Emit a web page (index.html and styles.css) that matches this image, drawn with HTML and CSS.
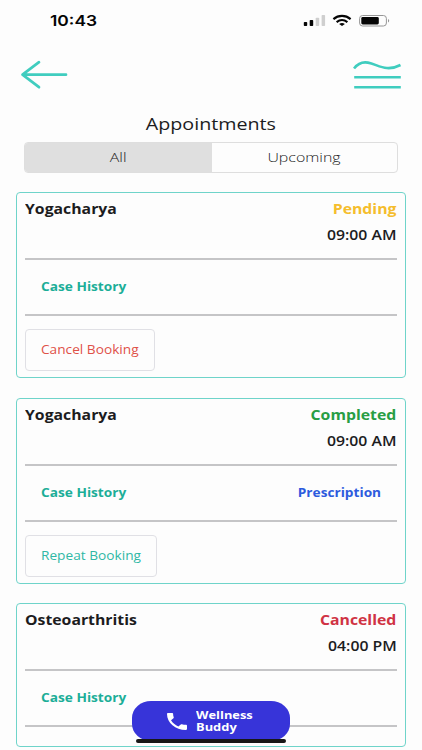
FILE: index.html
```html
<!DOCTYPE html>
<html lang="en">
<head>
<meta charset="utf-8">
<title>Appointments</title>
<link rel="stylesheet" href="styles.css">
</head>
<body>
<div class="screen">
  <header class="status">
    <span class="clock wide">10:43</span>
    <svg class="status-icons" width="88" height="14" viewBox="0 0 88 14">
      <g fill="#050505"><rect x="0.8" y="8" width="3.4" height="4" rx="0.8"/><rect x="6.7" y="6" width="3.5" height="6" rx="0.8"/></g>
      <g fill="#cfcfcf"><rect x="12.7" y="3.7" width="3.5" height="8.3" rx="0.8"/><rect x="18.6" y="1" width="3.5" height="11" rx="0.8"/></g>
      <g fill="none" stroke="#050505" stroke-width="2.1">
        <path d="M30.4 5.1C35.4.8 42.6.8 47.6 5.1"/>
        <path d="M33.6 8.1C37 5.5 41 5.5 44.4 8.1"/>
      </g>
      <path d="M36.1 9.9Q39 8 41.9 9.9L39 12.1Z" fill="#050505"/>
      <rect x="56.6" y="1.5" width="26.8" height="10.5" rx="3" fill="none" stroke="#969696"/>
      <rect x="58.3" y="3.1" width="17.5" height="7.4" rx="1.4" fill="#050505"/>
      <path d="M85 5C86.6 5.4 86.6 8 85 8.4Z" fill="#969696"/>
    </svg>
  </header>
  <nav class="nav">
    <svg width="50" height="34" viewBox="0 0 50 34" fill="none" stroke="#40cdbf" stroke-width="2.7" stroke-linecap="round" stroke-linejoin="round"><path d="M46 17.7H3M19 5.2L2.500 17.7L19 30.2"/></svg>
    <svg width="50" height="34" viewBox="0 0 50 34" fill="none" stroke="#40cdbf" stroke-width="2.6"><path d="M1 11.500C4 7.500 9 4.500 15 5.600C25 7.500 33 15.500 47.500 8"/><path d="M1.200 20.200H47.800M1.200 30.200H47.800"/></svg>
  </nav>
  <h1 class="title"><span class="wide">Appointments</span></h1>
  <div class="tabs">
    <div class="tab active"><span class="wide">All</span></div>
    <div class="tab"><span class="wide">Upcoming</span></div>
  </div>
  <main class="list">
    <article class="card">
      <div class="head"><span class="wide left">Yogacharya</span><span class="wide right pending">Pending</span></div>
      <div class="time"><span class="wide right">09:00 AM</span></div>
      <div class="links"><span class="wide left teal">Case History</span></div>
      <div class="btn cancel"><span class="wide left">Cancel Booking</span></div>
    </article>
    <article class="card">
      <div class="head"><span class="wide left">Yogacharya</span><span class="wide right completed">Completed</span></div>
      <div class="time"><span class="wide right">09:00 AM</span></div>
      <div class="links"><span class="wide left teal">Case History</span><span class="wide right blue">Prescription</span></div>
      <div class="btn repeat"><span class="wide left">Repeat Booking</span></div>
    </article>
    <article class="card short">
      <div class="head"><span class="wide left">Osteoarthritis</span><span class="wide right cancelled">Cancelled</span></div>
      <div class="time"><span class="wide right">04:00 PM</span></div>
      <div class="links"><span class="wide left teal">Case History</span></div>
    </article>
  </main>
  <div class="buddy">
    <svg width="20" height="17" viewBox="3 3 18 18" preserveAspectRatio="none" fill="#fff"><path d="M6.620 10.790c1.440 2.830 3.760 5.140 6.590 6.590l2.200-2.200c.27-.27.67-.36 1.020-.24 1.120.37 2.330.57 3.570.57.55 0 1 .45 1 1V20c0 .55-.45 1-1 1-9.390 0-17-7.610-17-17 0-.55.45-1 1-1h3.500c.55 0 1 .45 1 1 0 1.250.2 2.450.57 3.570.11.35.03.74-.25 1.020l-2.200 2.200z"/></svg>
    <span class="wide left">Wellness<br>Buddy</span>
  </div>
  <div class="home"></div>
</div>
</body>
</html>
```
FILE: styles.css
```css
* { box-sizing: border-box; }
body { margin: 0; background: #fdfdfd; color: #1c1c1e; font-family: "Open Sans", sans-serif; }
.screen { position: relative; width: 422px; height: 750px; overflow: hidden; }
/* Text is drawn with a widened aspect. */
.wide { display: inline-block; white-space: nowrap; transform: scaleX(var(--stretch, 1.17)); }
.left { transform-origin: left center; }
.right { transform-origin: right center; }
.status { display: flex; justify-content: space-between; height: 42px; padding: 14px 31px 0 50px; }
.clock { --stretch: 1.16; font: 600 15px/14px Inter, sans-serif; transform-origin: left center; color: #050505; }
.nav { display: flex; justify-content: space-between; height: 68px; padding: 15px 19px 0 20px; }
.title { --stretch: 1.23; margin: 0; height: 32px; font-size: 16px; line-height: 29px; font-weight: 400; text-align: center; }
.tabs { --stretch: 1.18; display: flex; width: 374px; height: 31px; margin-left: 24px; border: 1px solid #dedede; border-radius: 4px; overflow: hidden; }
.tab { flex: 1; text-align: center; font-size: 13.5px; line-height: 29px; font-weight: 300; color: #222; }
.active { flex: 0 0 187px; background: #dfdfdf; }
.list { display: flex; flex-direction: column; gap: 19.5px; padding: 19px 16px 0; }
.card { height: 186px; flex: none; border: 1.3px solid #6fd4ca; border-radius: 4px; padding: 3px 8px 0; }
.short { height: 144px; }
.head { display: flex; justify-content: space-between; font-size: 13.5px; line-height: 26px; font-weight: 700; }
.time { display: flex; justify-content: flex-end; height: 36px; font-size: 13.5px; line-height: 26px; font-weight: 600; }
.head .right, .time .right { margin-right: 0.5px; }
.links { --stretch: 1.14; display: flex; justify-content: space-between; height: 58px; padding: 0 16px; border: solid #c5c5c7; border-width: 2px 0; font-size: 12px; line-height: 54px; font-weight: 700; }
.btn { --stretch: 1.14; width: 130px; height: 42px; margin-top: 13px; padding-left: 15px; border: 1px solid #e0e0e5; border-radius: 4px; font-size: 12px; line-height: 40px; }
.repeat { width: 132px; color: #2eb8a5; }
.cancel { color: #df5148; }
.pending { color: #f5bd2d; }
.completed { color: #289e44; }
.cancelled { color: #d03344; }
.teal { color: #1cae98; }
.blue { color: #2d5bde; }
.buddy { position: absolute; left: 132px; top: 701px; width: 158px; height: 40px; border-radius: 19px / 17px; background: #3734d9; color: #fff; display: flex; align-items: center; gap: 9px; padding-left: 35px; font-size: 11px; line-height: 12px; font-weight: 700; }
.home { position: absolute; left: 136px; top: 739px; width: 150px; height: 4px; border-radius: 2px; background: #171717; }
```
